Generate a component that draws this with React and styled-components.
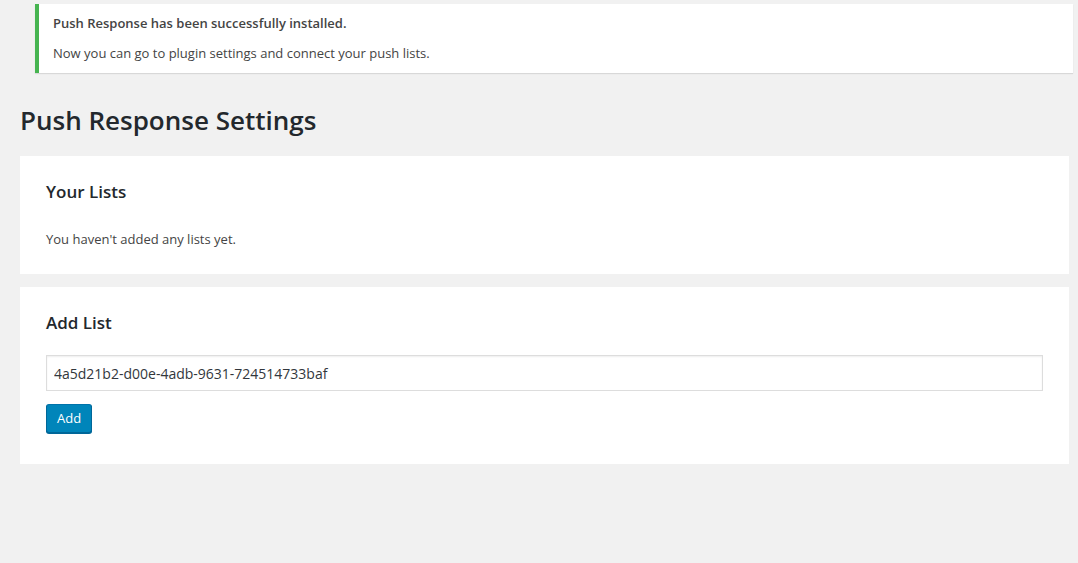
import React from "react";
import styled, { createGlobalStyle } from "styled-components";

const GlobalStyle = createGlobalStyle`
  html, body {
    margin: 0;
    padding: 0;
    background: #f1f1f1;
    font-family: "Open Sans", "Liberation Sans", sans-serif;
    color: #444;
  }
`;

const Wrap = styled.div`
  padding: 4px 9px 40px 20px;
`;

const Notice = styled.div`
  margin: 0 -4px 0 15px;
  background: #fff;
  border-left: 4px solid #46b450;
  box-shadow: 0 1px 1px 0 rgba(0, 0, 0, 0.1);
  padding: 1px 12px;
`;

const NoticeText = styled.p`
  margin: 6.5px 0;
  padding: 2px;
  font-size: 13px;
  line-height: 19.5px;
  color: #444;
  font-weight: ${(p) => (p.strong ? 600 : 400)};
`;

const Title = styled.h1`
  margin: 33px 0 21.5px;
  padding: 0;
  font-size: 26px;
  line-height: 29px;
  font-weight: 600;
  color: #23282d;
`;

const Card = styled.section`
  background: #fff;
  padding: 24px 26px ${(p) => p.bottom}px;
  margin-bottom: 13px;
`;

const CardTitle = styled.h2`
  margin: 0;
  font-size: 17px;
  line-height: 24px;
  font-weight: 600;
  color: #23282d;
`;

const Empty = styled.p`
  margin: 25px 0 0;
  font-size: 13px;
  line-height: 20px;
  color: #444;
`;

const Form = styled.form`
  display: flex;
  flex-direction: column;
  align-items: flex-start;
  gap: 13px;
  margin-top: 20px;
`;

const TextInput = styled.input`
  box-sizing: border-box;
  width: 100%;
  height: 36px;
  margin: 0;
  padding: 0 7px;
  border: 1px solid #ddd;
  box-shadow: inset 0 1px 2px rgba(0, 0, 0, 0.07);
  background: #fff;
  font-family: inherit;
  font-size: 14px;
  color: #32373c;
  outline: none;
`;

const Button = styled.button`
  box-sizing: border-box;
  height: 29px;
  padding: 0 10px 1px;
  border: 1px solid #0073aa;
  border-color: #0073aa #006799 #006799;
  border-radius: 3px;
  background: #0085ba;
  box-shadow: 0 1px 0 #006799;
  color: #fff;
  font-family: inherit;
  font-size: 13px;
  line-height: 26px;
  cursor: pointer;
`;

export default function App() {
  return (
    <>
      <GlobalStyle />
      <Wrap>
        <Notice>
          <NoticeText strong>Push Response has been successfully installed.</NoticeText>
          <NoticeText>Now you can go to plugin settings and connect your push lists.</NoticeText>
        </Notice>
        <Title>Push Response Settings</Title>
        <Card bottom={25}>
          <CardTitle>Your Lists</CardTitle>
          <Empty>You haven't added any lists yet.</Empty>
        </Card>
        <Card bottom={31}>
          <CardTitle>Add List</CardTitle>
          <Form onSubmit={(e) => e.preventDefault()}>
            <TextInput type="text" defaultValue="4a5d21b2-d00e-4adb-9631-724514733baf" />
            <Button type="submit">Add</Button>
          </Form>
        </Card>
      </Wrap>
    </>
  );
}
